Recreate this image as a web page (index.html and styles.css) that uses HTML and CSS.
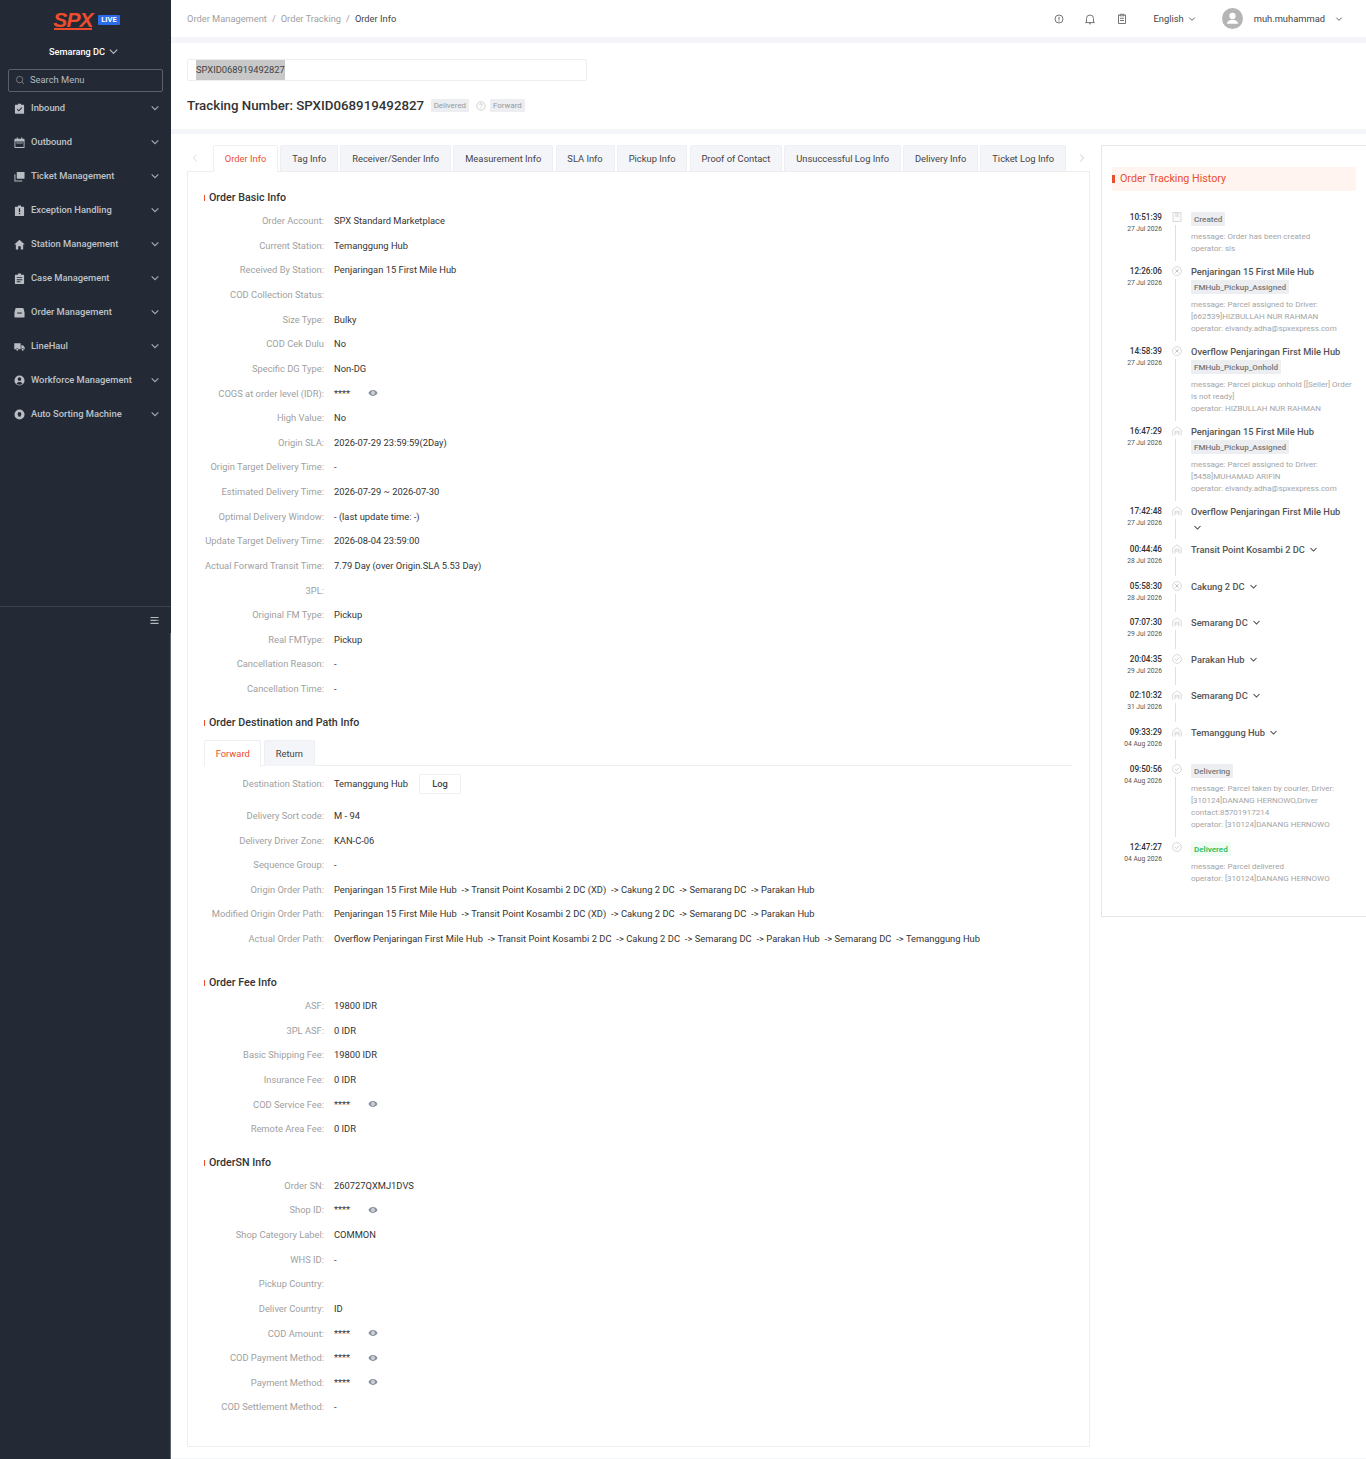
FILE: index.html
```html
<!DOCTYPE html>
<html lang="en">
<head>
    <meta charset="UTF-8">
    <meta name="viewport" content="width=device-width, initial-scale=1.0">
    <title>Order Info</title>
    <link rel="stylesheet" href="styles.css">
</head>
<body>
    <svg class="sprite" width="0" height="0">
        <symbol id="chev" viewBox="0 0 12 12"><path d="M2 4l4 4 4-4" fill="none" stroke="currentColor" stroke-width="1.4"/></symbol>
        <symbol id="eye" viewBox="0 0 12 12"><path fill-rule="evenodd" d="M6 2.5C3.5 2.5 1.5 4 .5 6c1 2 3 3.5 5.5 3.5S10.5 8 11.5 6C10.5 4 8.5 2.5 6 2.5zM6 8a2 2 0 1 1 0-4 2 2 0 0 1 0 4z" fill="#8a94a0"/><circle cx="6" cy="6" r="1" fill="#8a94a0"/></symbol>
        <symbol id="tl-doc" viewBox="0 0 10 10"><rect x="1" y=".5" width="8" height="9" fill="#fafafa" stroke="#d2d2d2" stroke-width=".8"/><path d="M3 1v4h4V1" fill="#e6e6e6"/></symbol>
        <symbol id="tl-x" viewBox="0 0 10 10"><circle cx="5" cy="5" r="4.4" fill="none" stroke="#cfcfcf" stroke-width=".8"/><path d="M3.3 3.3l3.4 3.4M6.7 3.3L3.3 6.7" stroke="#c4c4c4" stroke-width="1"/></symbol>
        <symbol id="tl-hub" viewBox="0 0 10 10"><path d="M.7 9.5V4.2L5 .8l4.3 3.4v5.3" fill="none" stroke="#cfcfcf" stroke-width=".8"/><path d="M3 9.5V5.2h4v4.3M3 7h4" fill="none" stroke="#cfcfcf" stroke-width=".8"/></symbol>
        <symbol id="tl-ok" viewBox="0 0 10 10"><circle cx="5" cy="5" r="4.4" fill="none" stroke="#cfcfcf" stroke-width=".8"/><path d="M2.8 5l1.6 1.6 2.9-3" fill="none" stroke="#c4c4c4" stroke-width=".8"/></symbol>
    </svg>

    <div class="layout">
        <aside class="sidebar">
            <div class="sidebar-top">
                <div class="brand">
                    <div class="brand-logo"><span class="brand-name">SPX</span></div>
                    <span class="brand-live">LIVE</span>
                </div>
                <div class="store">Semarang DC <svg class="store-chev"><use href="#chev"/></svg></div>
                <div class="menu-search">
                    <svg class="menu-search-icon" viewBox="0 0 12 12"><circle cx="5.5" cy="5.5" r="3.8" fill="none" stroke="#8b9098" stroke-width=".9"/><path d="M8.3 8.3l2.5 2.5" stroke="#8b9098" stroke-width=".9"/></svg>
                    <span>Search Menu</span>
                </div>
                <nav class="menu">
                    <div class="menu-item">
                        <svg class="menu-icon" viewBox="0 0 12 12"><path d="M1.5 2h2.800V.8h3.400V2h2.800a.5.5 0 0 1 .5.5v8.700a.5.5 0 0 1-.5.5h-9a.5.5 0 0 1-.5-.5V2.500a.5.5 0 0 1 .5-.5z"/><path d="M3.5 6.8l1.800 1.700 3.200-3.500" fill="none" stroke="#232a35" stroke-width="1.1"/></svg>
                        <span class="menu-text">Inbound</span><svg class="menu-chev"><use href="#chev"/></svg>
                    </div>
                    <div class="menu-item">
                        <svg class="menu-icon" viewBox="0 0 12 12"><path fill-rule="evenodd" d="M3 .5h1.200V2h3.600V.5H9V2h2a.5.5 0 0 1 .5.5v9a.5.5 0 0 1-.5.5H1a.5.5 0 0 1-.5-.5v-9A.5.5 0 0 1 1 2h2zM1.500 5v6h9V5z"/><path d="M2.5 6h7v1h-7z"/></svg>
                        <span class="menu-text">Outbound</span><svg class="menu-chev"><use href="#chev"/></svg>
                    </div>
                    <div class="menu-item">
                        <svg class="menu-icon" viewBox="0 0 12 12"><path d="M3.5 1H11a.5.5 0 0 1 .5.5V8a.5.5 0 0 1-.5.5H3.500A.5.5 0 0 1 3 8V1.500A.5.5 0 0 1 3.500 1z"/><path d="M1 3.5V11h8" fill="none" stroke="#b9bcc2" stroke-width="1.1"/></svg>
                        <span class="menu-text">Ticket Management</span><svg class="menu-chev"><use href="#chev"/></svg>
                    </div>
                    <div class="menu-item">
                        <svg class="menu-icon" viewBox="0 0 12 12"><path d="M1.5 2h2.800V.6h3.400V2h2.800a.5.5 0 0 1 .5.5v9a.5.5 0 0 1-.5.5h-9a.5.5 0 0 1-.5-.5v-9a.5.5 0 0 1 .5-.5z"/><path d="M5.3 3.500h1.400v4.400H5.300zM5.300 8.800h1.400v1.400H5.300z" fill="#232a35"/></svg>
                        <span class="menu-text">Exception Handling</span><svg class="menu-chev"><use href="#chev"/></svg>
                    </div>
                    <div class="menu-item">
                        <svg class="menu-icon" viewBox="0 0 12 12"><path d="M6 .8l5.700 5.200H10v5.500H7.400V8H4.600v3.500H2V6H.3z"/></svg>
                        <span class="menu-text">Station Management</span><svg class="menu-chev"><use href="#chev"/></svg>
                    </div>
                    <div class="menu-item">
                        <svg class="menu-icon" viewBox="0 0 12 12"><path d="M1.5 2h2.800V.6h3.400V2h2.800a.5.5 0 0 1 .5.5v9a.5.5 0 0 1-.5.5h-9a.5.5 0 0 1-.5-.5v-9a.5.5 0 0 1 .5-.5z"/><path d="M3 4.500h6v1H3zM3 6.800h6v1H3zM3 9h4v1H3z" fill="#232a35"/></svg>
                        <span class="menu-text">Case Management</span><svg class="menu-chev"><use href="#chev"/></svg>
                    </div>
                    <div class="menu-item">
                        <svg class="menu-icon" viewBox="0 0 12 12"><path d="M2.5 1h7a1 1 0 0 1 1 .8l1 4.200v4.500a1 1 0 0 1-1 1h-9a1 1 0 0 1-1-1V6l1-4.200a1 1 0 0 1 1-.8z"/><path d="M3.5 6h5v1.200h-5z" fill="#232a35"/></svg>
                        <span class="menu-text">Order Management</span><svg class="menu-chev"><use href="#chev"/></svg>
                    </div>
                    <div class="menu-item">
                        <svg class="menu-icon" viewBox="0 0 12 12"><path d="M.3 2.500h7V9H5a1.500 1.500 0 0 0-2.800 0H.3zM8 4.500h1.800L11.700 7v2h-.8a1.500 1.500 0 0 0-2.800 0H8z"/><circle cx="3.6" cy="9.6" r="1.1"/><circle cx="9.5" cy="9.6" r="1.1"/></svg>
                        <span class="menu-text">LineHaul</span><svg class="menu-chev"><use href="#chev"/></svg>
                    </div>
                    <div class="menu-item">
                        <svg class="menu-icon" viewBox="0 0 12 12"><path fill-rule="evenodd" d="M6 .5a5.500 5.500 0 1 1 0 11 5.500 5.500 0 0 1 0-11zM6 2.500a2 2 0 1 0 0 4 2 2 0 0 0 0-4zM2.800 9.200A4.500 4.500 0 0 0 6 10.500a4.500 4.500 0 0 0 3.200-1.300C8.500 8.200 7.300 7.600 6 7.600s-2.500.6-3.200 1.600z"/></svg>
                        <span class="menu-text">Workforce Management</span><svg class="menu-chev"><use href="#chev"/></svg>
                    </div>
                    <div class="menu-item">
                        <svg class="menu-icon" viewBox="0 0 12 12"><circle cx="6" cy="6" r="5.5"/><path d="M4.500 3.500h3l.5 2.500-1.200 2.500H5.200L4 6z" fill="#232a35"/></svg>
                        <span class="menu-text">Auto Sorting Machine</span><svg class="menu-chev"><use href="#chev"/></svg>
                    </div>
                </nav>
                <div class="sidebar-foot">
                    <svg class="collapse-icon" viewBox="0 0 10 10"><path d="M.5 1h9v1.300h-9zM.5 4.300h7v1.300h-7zM8.300 4.300h1.200v1.300H8.300zM.5 7.600h9v1.300h-9z" fill="#b5b8bd"/></svg>
                </div>
            </div>
            <div class="sidebar-rest"></div>
        </aside>

        <div class="page">
            <header class="topbar">
                <div class="crumbs">
                    <span>Order Management</span><i>/</i><span>Order Tracking</span><i>/</i><b>Order Info</b>
                </div>
                <div class="top-actions">
                    <svg class="top-icon" viewBox="0 0 12 12"><circle cx="6" cy="6" r="4" fill="none" stroke="#666" stroke-width=".9"/><path d="M6 3.800v3M6 7.400v1" stroke="#666" stroke-width="1"/></svg>
                    <svg class="top-icon" viewBox="0 0 12 12"><path d="M2.500 9V5.500a3.500 3.500 0 0 1 7 0V9l1 .6H1.500zM5 10.800h2" fill="none" stroke="#666" stroke-width=".9"/></svg>
                    <svg class="top-icon" viewBox="0 0 12 12"><path d="M4 2H2.500v8.500h7V2H8M4 1.300h4v1.500H4zM4 5.300h4M4 7.500h4" fill="none" stroke="#666" stroke-width=".9"/></svg>
                    <span class="lang">English <svg class="small-chev"><use href="#chev"/></svg></span>
                    <span class="avatar"><svg viewBox="0 0 20 20"><circle cx="10" cy="7.5" r="3" fill="#fff"/><path d="M4.500 15c.5-2.500 3-3.700 5.500-3.700s5 1.200 5.500 3.700z" fill="#fff"/></svg></span>
                    <span class="username">muh.muhammad</span>
                    <svg class="small-chev user-chev"><use href="#chev"/></svg>
                </div>
            </header>

            <section class="search-panel">
                <div class="track-input"><span class="track-selected">SPXID068919492827</span></div>
                <div class="track-head">
                    <h2>Tracking Number: SPXID068919492827</h2>
                    <span class="tag">Delivered</span>
                    <svg class="help-icon" viewBox="0 0 12 12"><circle cx="6" cy="6" r="5" fill="none" stroke="#aaa" stroke-width=".7"/><path d="M4.500 4.800A1.500 1.500 0 1 1 6.400 6.200C6 6.400 6 6.700 6 7.200M6 8v1" fill="none" stroke="#aaa" stroke-width=".7"/></svg>
                    <span class="tag">Forward</span>
                </div>
            </section>

            <div class="content">
                <main class="detail">
                    <div class="tabs">
                        <svg class="tab-arrow arrow-left" viewBox="0 0 8 10"><path d="M5.500 1.500L2.500 5l3 3.500" fill="none" stroke="#ddd"/></svg>
                        <span class="tab active">Order Info</span>
                        <span class="tab">Tag Info</span>
                        <span class="tab">Receiver/Sender Info</span>
                        <span class="tab">Measurement Info</span>
                        <span class="tab">SLA Info</span>
                        <span class="tab">Pickup Info</span>
                        <span class="tab">Proof of Contact</span>
                        <span class="tab">Unsuccessful Log Info</span>
                        <span class="tab">Delivery Info</span>
                        <span class="tab">Ticket Log Info</span>
                        <svg class="tab-arrow arrow-right" viewBox="0 0 8 10"><path d="M2.500 1.500l3 3.500-3 3.500" fill="none" stroke="#ccc"/></svg>
                    </div>
                    <div class="card">
                        <h3 class="section-title">Order Basic Info</h3>
                        <div class="rows">
                            <div class="row"><label>Order Account:</label><span>SPX Standard Marketplace</span></div>
                            <div class="row"><label>Current Station:</label><span>Temanggung Hub</span></div>
                            <div class="row"><label>Received By Station:</label><span>Penjaringan 15 First Mile Hub</span></div>
                            <div class="row"><label>COD Collection Status:</label><span></span></div>
                            <div class="row"><label>Size Type:</label><span>Bulky</span></div>
                            <div class="row"><label>COD Cek Dulu</label><span>No</span></div>
                            <div class="row"><label>Specific DG Type:</label><span>Non-DG</span></div>
                            <div class="row"><label>COGS at order level (IDR):</label><span class="masked">****</span><svg class="eye"><use href="#eye"/></svg></div>
                            <div class="row"><label>High Value:</label><span>No</span></div>
                            <div class="row"><label>Origin SLA:</label><span>2026-07-29 23:59:59(2Day)</span></div>
                            <div class="row"><label>Origin Target Delivery Time:</label><span>-</span></div>
                            <div class="row"><label>Estimated Delivery Time:</label><span>2026-07-29 ~ 2026-07-30</span></div>
                            <div class="row"><label>Optimal Delivery Window:</label><span>- (last update time: -)</span></div>
                            <div class="row"><label>Update Target Delivery Time:</label><span>2026-08-04 23:59:00</span></div>
                            <div class="row"><label>Actual Forward Transit Time:</label><span>7.79 Day (over Origin.SLA 5.53 Day)</span></div>
                            <div class="row"><label>3PL:</label><span></span></div>
                            <div class="row"><label>Original FM Type:</label><span>Pickup</span></div>
                            <div class="row"><label>Real FMType:</label><span>Pickup</span></div>
                            <div class="row"><label>Cancellation Reason:</label><span>-</span></div>
                            <div class="row"><label>Cancellation Time:</label><span>-</span></div>
                        </div>

                        <h3 class="section-title">Order Destination and Path Info</h3>
                        <div class="inner-tabs">
                            <span class="inner-tab active">Forward</span>
                            <span class="inner-tab">Return</span>
                        </div>
                        <div class="row row-dest"><label>Destination Station:</label><span>Temanggung Hub</span><button class="log-btn">Log</button></div>
                        <div class="rows rows-path">
                            <div class="row"><label>Delivery Sort code:</label><span>M - 94</span></div>
                            <div class="row"><label>Delivery Driver Zone:</label><span>KAN-C-06</span></div>
                            <div class="row"><label>Sequence Group:</label><span>-</span></div>
                            <div class="row"><label>Origin Order Path:</label><span class="path">Penjaringan 15 First Mile Hub&nbsp; -&gt; Transit Point Kosambi 2 DC (XD)&nbsp; -&gt; Cakung 2 DC&nbsp; -&gt; Semarang DC&nbsp; -&gt; Parakan Hub</span></div>
                            <div class="row"><label>Modified Origin Order Path:</label><span class="path">Penjaringan 15 First Mile Hub&nbsp; -&gt; Transit Point Kosambi 2 DC (XD)&nbsp; -&gt; Cakung 2 DC&nbsp; -&gt; Semarang DC&nbsp; -&gt; Parakan Hub</span></div>
                            <div class="row"><label>Actual Order Path:</label><span class="path">Overflow Penjaringan First Mile Hub&nbsp; -&gt; Transit Point Kosambi 2 DC&nbsp; -&gt; Cakung 2 DC&nbsp; -&gt; Semarang DC&nbsp; -&gt; Parakan Hub&nbsp; -&gt; Semarang DC&nbsp; -&gt; Temanggung Hub</span></div>
                        </div>

                        <h3 class="section-title">Order Fee Info</h3>
                        <div class="rows">
                            <div class="row"><label>ASF:</label><span>19800 IDR</span></div>
                            <div class="row"><label>3PL ASF:</label><span>0 IDR</span></div>
                            <div class="row"><label>Basic Shipping Fee:</label><span>19800 IDR</span></div>
                            <div class="row"><label>Insurance Fee:</label><span>0 IDR</span></div>
                            <div class="row"><label>COD Service Fee:</label><span class="masked">****</span><svg class="eye"><use href="#eye"/></svg></div>
                            <div class="row"><label>Remote Area Fee:</label><span>0 IDR</span></div>
                        </div>

                        <h3 class="section-title">OrderSN Info</h3>
                        <div class="rows">
                            <div class="row"><label>Order SN:</label><span>260727QXMJ1DVS</span></div>
                            <div class="row"><label>Shop ID:</label><span class="masked">****</span><svg class="eye"><use href="#eye"/></svg></div>
                            <div class="row"><label>Shop Category Label:</label><span>COMMON</span></div>
                            <div class="row"><label>WHS ID:</label><span>-</span></div>
                            <div class="row"><label>Pickup Country:</label><span></span></div>
                            <div class="row"><label>Deliver Country:</label><span>ID</span></div>
                            <div class="row"><label>COD Amount:</label><span class="masked">****</span><svg class="eye"><use href="#eye"/></svg></div>
                            <div class="row"><label>COD Payment Method:</label><span class="masked">****</span><svg class="eye"><use href="#eye"/></svg></div>
                            <div class="row"><label>Payment Method:</label><span class="masked">****</span><svg class="eye"><use href="#eye"/></svg></div>
                            <div class="row"><label>COD Settlement Method:</label><span>-</span></div>
                        </div>
                    </div>
                </main>

                <aside class="history">
                    <div class="history-head">Order Tracking History</div>
                    <div class="timeline">
                        <div class="tl-item">
                            <div class="tl-time"><b>10:51:39</b><small>27 Jul 2026</small></div>
                            <div class="tl-node"><svg><use href="#tl-doc"/></svg><i></i></div>
                            <div class="tl-body">
                                <span class="tl-tag">Created</span>
                                <p>message: Order has been created<br>operator: sls</p>
                            </div>
                        </div>
                        <div class="tl-item">
                            <div class="tl-time"><b>12:26:06</b><small>27 Jul 2026</small></div>
                            <div class="tl-node"><svg><use href="#tl-x"/></svg><i></i></div>
                            <div class="tl-body">
                                <div class="tl-title">Penjaringan 15 First Mile Hub</div>
                                <span class="tl-tag">FMHub_Pickup_Assigned</span>
                                <p>message: Parcel assigned to Driver: [662539]HIZBULLAH NUR RAHMAN<br>operator: elvandy.adha@spxexpress.com</p>
                            </div>
                        </div>
                        <div class="tl-item">
                            <div class="tl-time"><b>14:58:39</b><small>27 Jul 2026</small></div>
                            <div class="tl-node"><svg><use href="#tl-x"/></svg><i></i></div>
                            <div class="tl-body">
                                <div class="tl-title">Overflow Penjaringan First Mile Hub</div>
                                <span class="tl-tag">FMHub_Pickup_Onhold</span>
                                <p>message: Parcel pickup onhold [[Seller] Order is not ready]<br>operator: HIZBULLAH NUR RAHMAN</p>
                            </div>
                        </div>
                        <div class="tl-item">
                            <div class="tl-time"><b>16:47:29</b><small>27 Jul 2026</small></div>
                            <div class="tl-node"><svg><use href="#tl-hub"/></svg><i></i></div>
                            <div class="tl-body">
                                <div class="tl-title">Penjaringan 15 First Mile Hub</div>
                                <span class="tl-tag">FMHub_Pickup_Assigned</span>
                                <p>message: Parcel assigned to Driver: [5458]MUHAMAD ARIFIN<br>operator: elvandy.adha@spxexpress.com</p>
                            </div>
                        </div>
                        <div class="tl-item">
                            <div class="tl-time"><b>17:42:48</b><small>27 Jul 2026</small></div>
                            <div class="tl-node"><svg><use href="#tl-hub"/></svg><i></i></div>
                            <div class="tl-body">
                                <div class="tl-title">Overflow Penjaringan First Mile Hub <svg class="tl-chev tl-chev-wrap"><use href="#chev"/></svg></div>
                            </div>
                        </div>
                        <div class="tl-item">
                            <div class="tl-time"><b>00:44:46</b><small>28 Jul 2026</small></div>
                            <div class="tl-node"><svg><use href="#tl-hub"/></svg><i></i></div>
                            <div class="tl-body"><div class="tl-title">Transit Point Kosambi 2 DC <svg class="tl-chev"><use href="#chev"/></svg></div></div>
                        </div>
                        <div class="tl-item">
                            <div class="tl-time"><b>05:58:30</b><small>28 Jul 2026</small></div>
                            <div class="tl-node"><svg><use href="#tl-x"/></svg><i></i></div>
                            <div class="tl-body"><div class="tl-title">Cakung 2 DC <svg class="tl-chev"><use href="#chev"/></svg></div></div>
                        </div>
                        <div class="tl-item">
                            <div class="tl-time"><b>07:07:30</b><small>29 Jul 2026</small></div>
                            <div class="tl-node"><svg><use href="#tl-hub"/></svg><i></i></div>
                            <div class="tl-body"><div class="tl-title">Semarang DC <svg class="tl-chev"><use href="#chev"/></svg></div></div>
                        </div>
                        <div class="tl-item">
                            <div class="tl-time"><b>20:04:35</b><small>29 Jul 2026</small></div>
                            <div class="tl-node"><svg><use href="#tl-ok"/></svg><i></i></div>
                            <div class="tl-body"><div class="tl-title">Parakan Hub <svg class="tl-chev"><use href="#chev"/></svg></div></div>
                        </div>
                        <div class="tl-item">
                            <div class="tl-time"><b>02:10:32</b><small>31 Jul 2026</small></div>
                            <div class="tl-node"><svg><use href="#tl-hub"/></svg><i></i></div>
                            <div class="tl-body"><div class="tl-title">Semarang DC <svg class="tl-chev"><use href="#chev"/></svg></div></div>
                        </div>
                        <div class="tl-item">
                            <div class="tl-time"><b>09:33:29</b><small>04 Aug 2026</small></div>
                            <div class="tl-node"><svg><use href="#tl-hub"/></svg><i></i></div>
                            <div class="tl-body"><div class="tl-title">Temanggung Hub <svg class="tl-chev"><use href="#chev"/></svg></div></div>
                        </div>
                        <div class="tl-item">
                            <div class="tl-time"><b>09:50:56</b><small>04 Aug 2026</small></div>
                            <div class="tl-node"><svg><use href="#tl-ok"/></svg><i></i></div>
                            <div class="tl-body">
                                <span class="tl-tag">Delivering</span>
                                <p>message: Parcel taken by courier, Driver: [310124]DANANG HERNOWO,Driver contact:85701917214<br>operator: [310124]DANANG HERNOWO</p>
                            </div>
                        </div>
                        <div class="tl-item tl-last">
                            <div class="tl-time"><b>12:47:27</b><small>04 Aug 2026</small></div>
                            <div class="tl-node"><svg><use href="#tl-ok"/></svg></div>
                            <div class="tl-body">
                                <span class="tl-tag tl-tag-green">Delivered</span>
                                <p>message: Parcel delivered<br>operator: [310124]DANANG HERNOWO</p>
                            </div>
                        </div>
                    </div>
                </aside>
            </div>
        </div>
    </div>
</body>
</html>
```

FILE: styles.css
```css
* {
    box-sizing: border-box;
}

html, body {
    margin: 0;
    padding: 0;
}

body {
    font-family: Roboto, 'Liberation Sans', sans-serif;
    font-size: 9.35px;
    color: #333;
    background-color: #fff;
    overflow-x: hidden;
}

.sprite {
    display: block;
    height: 0;
}

.layout {
    display: flex;
    width: 1366px;
    height: 1459px;
    overflow: hidden;
}

/* sidebar */
.sidebar {
    width: 171px;
    flex: none;
    display: flex;
    flex-direction: column;
    background-color: #232a35;
    color: #bfc3c9;
}

.sidebar-top {
    height: 633px;
    flex: none;
    display: flex;
    flex-direction: column;
}

.sidebar-rest {
    flex: 1;
    border-right: 1px solid #5d626b;
}

.brand {
    height: 40px;
    display: flex;
    justify-content: center;
    align-items: center;
    gap: 6px;
    padding-left: 3px;
}

.brand-logo {
    width: 38px;
    height: 19px;
    border-bottom: 2px solid #ee4d2d;
    display: flex;
    justify-content: center;
    align-items: center;
    margin-top: 1px;
}

.brand-name {
    font-family: 'Liberation Sans', sans-serif;
    font-size: 21px;
    font-weight: bold;
    font-style: italic;
    letter-spacing: -0.8px;
    line-height: 17px;
    color: #ee4d2d;
}

.brand-live {
    width: 22px;
    height: 10px;
    background-color: #2b6de8;
    border-radius: 1px;
    color: #fff;
    font-size: 7.5px;
    font-weight: 700;
    line-height: 10px;
    text-align: center;
}

.store {
    height: 22px;
    display: flex;
    justify-content: center;
    align-items: center;
    gap: 3px;
    padding-right: 3px;
    color: #fff;
    font-size: 9.2px;
    font-weight: 500;
}

.store-chev {
    width: 11px;
    height: 11px;
    color: #b5b8bd;
}

.menu-search {
    margin: 7px 8px 0;
    height: 23px;
    display: flex;
    align-items: center;
    gap: 5px;
    padding: 0 0 2px 6px;
    border: 1px solid #5b616b;
    border-radius: 2px;
    color: #b5bac2;
}

.menu-search-icon {
    width: 10px;
    height: 10px;
}

.menu {
    height: 517px;
    margin-top: -2px;
    border-bottom: 1px solid #3e444e;
}

.menu-item {
    height: 34px;
    display: flex;
    align-items: center;
    padding: 0 11px 0 14px;
    font-weight: 500;
}

.menu-icon {
    width: 11px;
    height: 11px;
    flex: none;
    fill: #b9bcc2;
    margin-right: 6px;
    position: relative;
    top: 1px;
}

.menu-text {
    flex: 1;
    white-space: nowrap;
}

.menu-chev {
    width: 10px;
    height: 10px;
    color: #a5a9b0;
    position: relative;
    top: 1px;
}

.sidebar-foot {
    flex: 1;
    display: flex;
    justify-content: flex-end;
    align-items: center;
    padding-right: 12px;
}

.collapse-icon {
    width: 9px;
    height: 9px;
}

/* page */
.page {
    flex: 1;
    min-width: 0;
    display: flex;
    flex-direction: column;
}

.topbar {
    height: 37px;
    flex: none;
    display: flex;
    align-items: center;
    justify-content: space-between;
    padding: 0 23px 0 16px;
}

.crumbs {
    display: flex;
    align-items: center;
    font-size: 9.3px;
    color: #a0a0a0;
}

.crumbs i {
    font-style: normal;
    margin: 0 5px;
}

.crumbs b {
    font-weight: 400;
    color: #444;
}

.top-actions {
    display: flex;
    align-items: center;
}

.top-icon {
    width: 12px;
    height: 12px;
    margin-right: 19.5px;
}

.lang {
    display: flex;
    align-items: center;
    gap: 4px;
    margin-left: 6px;
    color: #444;
}

.small-chev {
    width: 8px;
    height: 8px;
    color: #555;
}

.avatar {
    width: 21px;
    height: 21px;
    border-radius: 50%;
    background-color: #b5b5b5;
    margin-left: 26px;
    overflow: hidden;
}

.avatar svg {
    display: block;
    width: 21px;
    height: 21px;
}

.username {
    margin-left: 11px;
    color: #444;
}

.user-chev {
    margin-left: 10px;
}

.search-panel {
    height: 97px;
    flex: none;
    border-top: 6px solid #f4f5f9;
    border-bottom: 5px solid #f4f5f9;
    padding: 16px 16px 0;
}

.track-input {
    width: 400px;
    height: 22px;
    border: 1px solid #eeeeee;
    border-radius: 2px;
    padding-left: 8px;
    display: flex;
}

.track-selected {
    background-color: #c8c8c8;
    line-height: 20px;
    color: #444;
}

.track-head {
    display: flex;
    align-items: center;
    margin-top: 18px;
    height: 13px;
}

.track-head h2 {
    margin: 0 6.5px 0 0;
    font-size: 13.3px;
    font-weight: 500;
    color: #333;
}

.tag {
    height: 13px;
    line-height: 13px;
    padding: 0 3px;
    background-color: #eceef2;
    border-radius: 1px;
    color: #999;
    font-size: 7.9px;
}

.help-icon {
    width: 10px;
    height: 10px;
    margin: 0 4px 0 7px;
}

.content {
    flex: 1;
    display: flex;
    align-items: flex-start;
    padding: 11px 0 0 16px;
    border-bottom: 1px solid #f4f5f9;
}

.detail {
    width: 903px;
    flex: none;
}

/* tabs */
.tabs {
    display: flex;
    gap: 2.4px;
    height: 26px;
    padding-left: 26px;
    position: relative;
}

.tab {
    padding: 0 10.8px;
    height: 26px;
    line-height: 25px;
    background-color: #f4f5f9;
    border: 1px solid #eeeff3;
    border-bottom: 0;
    border-radius: 2px 2px 0 0;
    color: #444;
    white-space: nowrap;
}

.tab.active {
    background-color: #fff;
    color: #ee4d2d;
    height: 27px;
    position: relative;
    z-index: 1;
}

.tab-arrow {
    position: absolute;
    top: 8px;
    width: 8px;
    height: 10px;
}

.arrow-left {
    left: 4px;
}

.arrow-right {
    right: 4px;
}

.card {
    border: 1px solid #eeeeee;
    padding: 18px 17px 27px 16px;
}

.section-title {
    position: relative;
    margin: 13.7px 0 2.4px;
    height: 16px;
    line-height: 16px;
    padding-left: 5px;
    font-size: 10.7px;
    font-weight: 500;
    color: #333;
}

.section-title:first-child {
    margin-top: 0;
}

.section-title::before {
    content: "";
    position: absolute;
    left: 0;
    top: 5px;
    width: 1px;
    height: 6px;
    background-color: #ee4d2d;
}

.row {
    display: flex;
    align-items: center;
    height: 24.63px;
    white-space: nowrap;
}

.row label {
    width: 120px;
    flex: none;
    margin-right: 10px;
    text-align: right;
    color: #a0a0a0;
}

.masked {
    width: 34px;
}

.eye {
    width: 10px;
    height: 10px;
}

.path {
    word-spacing: 0.1px;
}

.inner-tabs {
    display: flex;
    gap: 2.6px;
    height: 26px;
    margin-top: 9.3px;
    border-bottom: 1px solid #eeeeee;
}

.inner-tab {
    padding: 0 10.7px;
    height: 26px;
    line-height: 25px;
    background-color: #f4f5f9;
    border: 1px solid #eeeff3;
    border-bottom: 0;
    border-radius: 2px 2px 0 0;
    color: #444;
}

.inner-tab.active {
    background-color: #fff;
    color: #ee4d2d;
}

.row-dest {
    margin-top: 6px;
    margin-bottom: 7.2px;
    height: 24px;
}

.log-btn {
    height: 20px;
    width: 42px;
    margin-left: 11px;
    padding: 0;
    background-color: #fff;
    border: 1px solid #eeeeee;
    border-radius: 2px;
    font: 500 9.35px Roboto, sans-serif;
    color: #444;
}

.rows-path {
    margin-bottom: 24px;
}

/* right panel */
.history {
    width: 265px;
    flex: none;
    height: 772px;
    margin-left: 11px;
    border: 1px solid #e6e6e6;
    border-right: 0;
    border-radius: 2px 0 0 0;
    padding: 21px 10px 0;
}

.history-head {
    height: 24px;
    line-height: 24px;
    padding-left: 8px;
    background: linear-gradient(#ee4d2d, #ee4d2d) no-repeat 0 8px / 3px 8px #fff4ef;
    border-radius: 2px;
    font-size: 10.7px;
    color: #ee4d2d;
}

.timeline {
    margin-top: 20px;
}

.tl-item {
    display: flex;
    min-height: 36.6px;
}

.tl-time {
    width: 51px;
    margin-left: -1px;
    flex: none;
    display: flex;
    flex-direction: column;
    align-items: flex-end;
    color: #333;
}

.tl-time b {
    font-size: 8.2px;
    font-weight: 500;
    line-height: 12px;
}

.tl-time small {
    font-size: 6.7px;
    line-height: 10px;
    margin-top: 1px;
    color: #555;
}

.tl-node {
    width: 29px;
    flex: none;
    display: flex;
    flex-direction: column;
    align-items: center;
    padding: 1px 0 4px;
}

.tl-node svg {
    display: block;
    width: 10px;
    height: 10px;
    margin-bottom: 3px;
}

.tl-node i {
    flex: 1;
    width: 1px;
    margin-left: -2px;
    background-color: #e0e0e0;
}

.tl-body {
    flex: 1;
    min-width: 0;
    padding-bottom: 10px;
}

.tl-title {
    font-size: 9.3px;
    font-weight: 500;
    line-height: 14px;
    color: #555;
}

.tl-tag {
    display: inline-block;
    height: 14px;
    line-height: 14px;
    margin: 1px 0 0;
    padding: 0 3px;
    background-color: #eceef2;
    border-radius: 1px;
    font-size: 8.1px;
    font-weight: 500;
    color: #777;
    vertical-align: top;
}

.tl-tag-green {
    background-color: #effcf3;
    color: #22bb55;
}

.tl-body p {
    margin: 5px 0 0;
    font-size: 8px;
    line-height: 12px;
    color: #a5a5a5;
}

.tl-chev {
    width: 9px;
    height: 9px;
    margin-left: 2px;
    vertical-align: -1px;
    color: #444;
}

.tl-chev-wrap {
    display: block;
    margin: 4px 0 1px 2px;
}
```
